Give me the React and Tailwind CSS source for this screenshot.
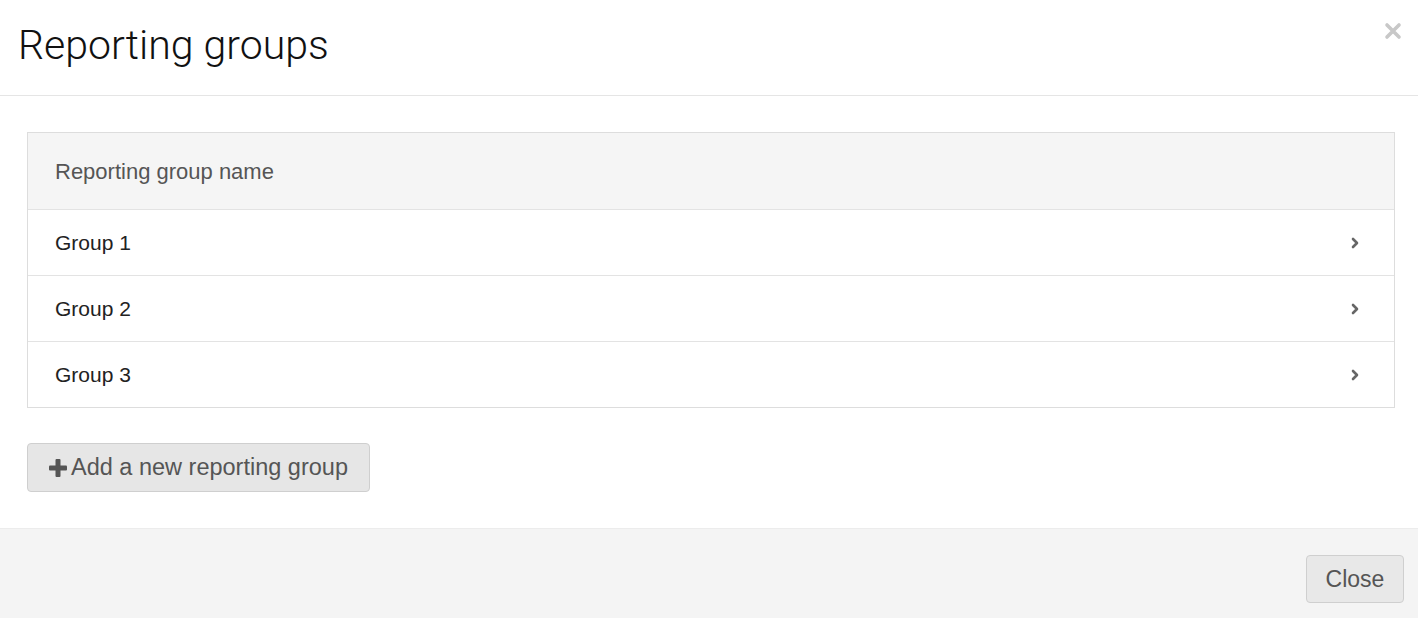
import React from "react";

const groups = ["Group 1", "Group 2", "Group 3"];

function Chevron() {
  return (
    <svg width="10" height="14" viewBox="0 0 10 14" className="text-[#666]">
      <path d="M3 3 L7 7 L3 11" fill="none" stroke="currentColor" strokeWidth="2.6" strokeLinecap="round" strokeLinejoin="round" />
    </svg>
  );
}

function Plus() {
  return (
    <svg width="20" height="20" viewBox="0 0 20 20" className="text-[#555]">
      <rect x="7.5" y="1" width="5" height="18" rx="1" fill="currentColor" />
      <rect x="1" y="7.5" width="18" height="5" rx="1" fill="currentColor" />
    </svg>
  );
}

export default function App() {
  return (
    <div className="w-[1418px] h-[618px] bg-white overflow-hidden flex flex-col" style={{ fontFamily: '"Liberation Sans", Arial, sans-serif' }}>
      {/* Header */}
      <div className="h-[96px] shrink-0 border-b border-[#e5e5e5] flex items-start justify-between pl-[18px] pr-[16px]">
        <h1 className="text-[41px] leading-none text-[#111] mt-[25px] font-light font-['Roboto',sans-serif]">Reporting groups</h1>
        <button className="mt-[22px] text-[#c8c8c8]">
          <svg width="18" height="18" viewBox="0 0 18 18">
            <path d="M3 3 L15 15 M15 3 L3 15" stroke="currentColor" strokeWidth="3.6" strokeLinecap="round" />
          </svg>
        </button>
      </div>

      {/* Body */}
      <div className="pt-[36px] pb-[36px] pl-[27px] pr-[23px] border-b border-[#ececec]">
        <div className="border border-[#dddddd]">
          <div className="h-[77px] bg-[#f5f5f5] border-b border-[#e3e3e3] flex items-center px-[27px]">
            <span className="text-[22px] text-[#555]">Reporting group name</span>
          </div>
          {groups.map((g, i) => (
            <div key={g} className={`flex items-center justify-between pl-[27px] pr-[34px] ${i < groups.length - 1 ? "h-[66px] border-b border-[#e3e3e3]" : "h-[65px]"}`}>
              <span className="text-[21px] text-[#222]">{g}</span>
              <Chevron />
            </div>
          ))}
        </div>
        <button className="mt-[35px] h-[49px] w-[343px] bg-[#e6e6e6] border border-[#cfcfcf] rounded-[4px] flex items-center pl-[20px] gap-[3px]">
          <Plus />
          <span className="text-[23.5px] text-[#555]">Add a new reporting group</span>
        </button>
      </div>

      {/* Footer */}
      <div className="flex-1 bg-[#f4f4f4] flex justify-end items-start pt-[26px] pr-[14px]">
        <button className="h-[48px] w-[98px] bg-[#e8e8e8] border border-[#cfcfcf] rounded-[4px] text-[23px] text-[#555]">
          Close
        </button>
      </div>
    </div>
  );
}
